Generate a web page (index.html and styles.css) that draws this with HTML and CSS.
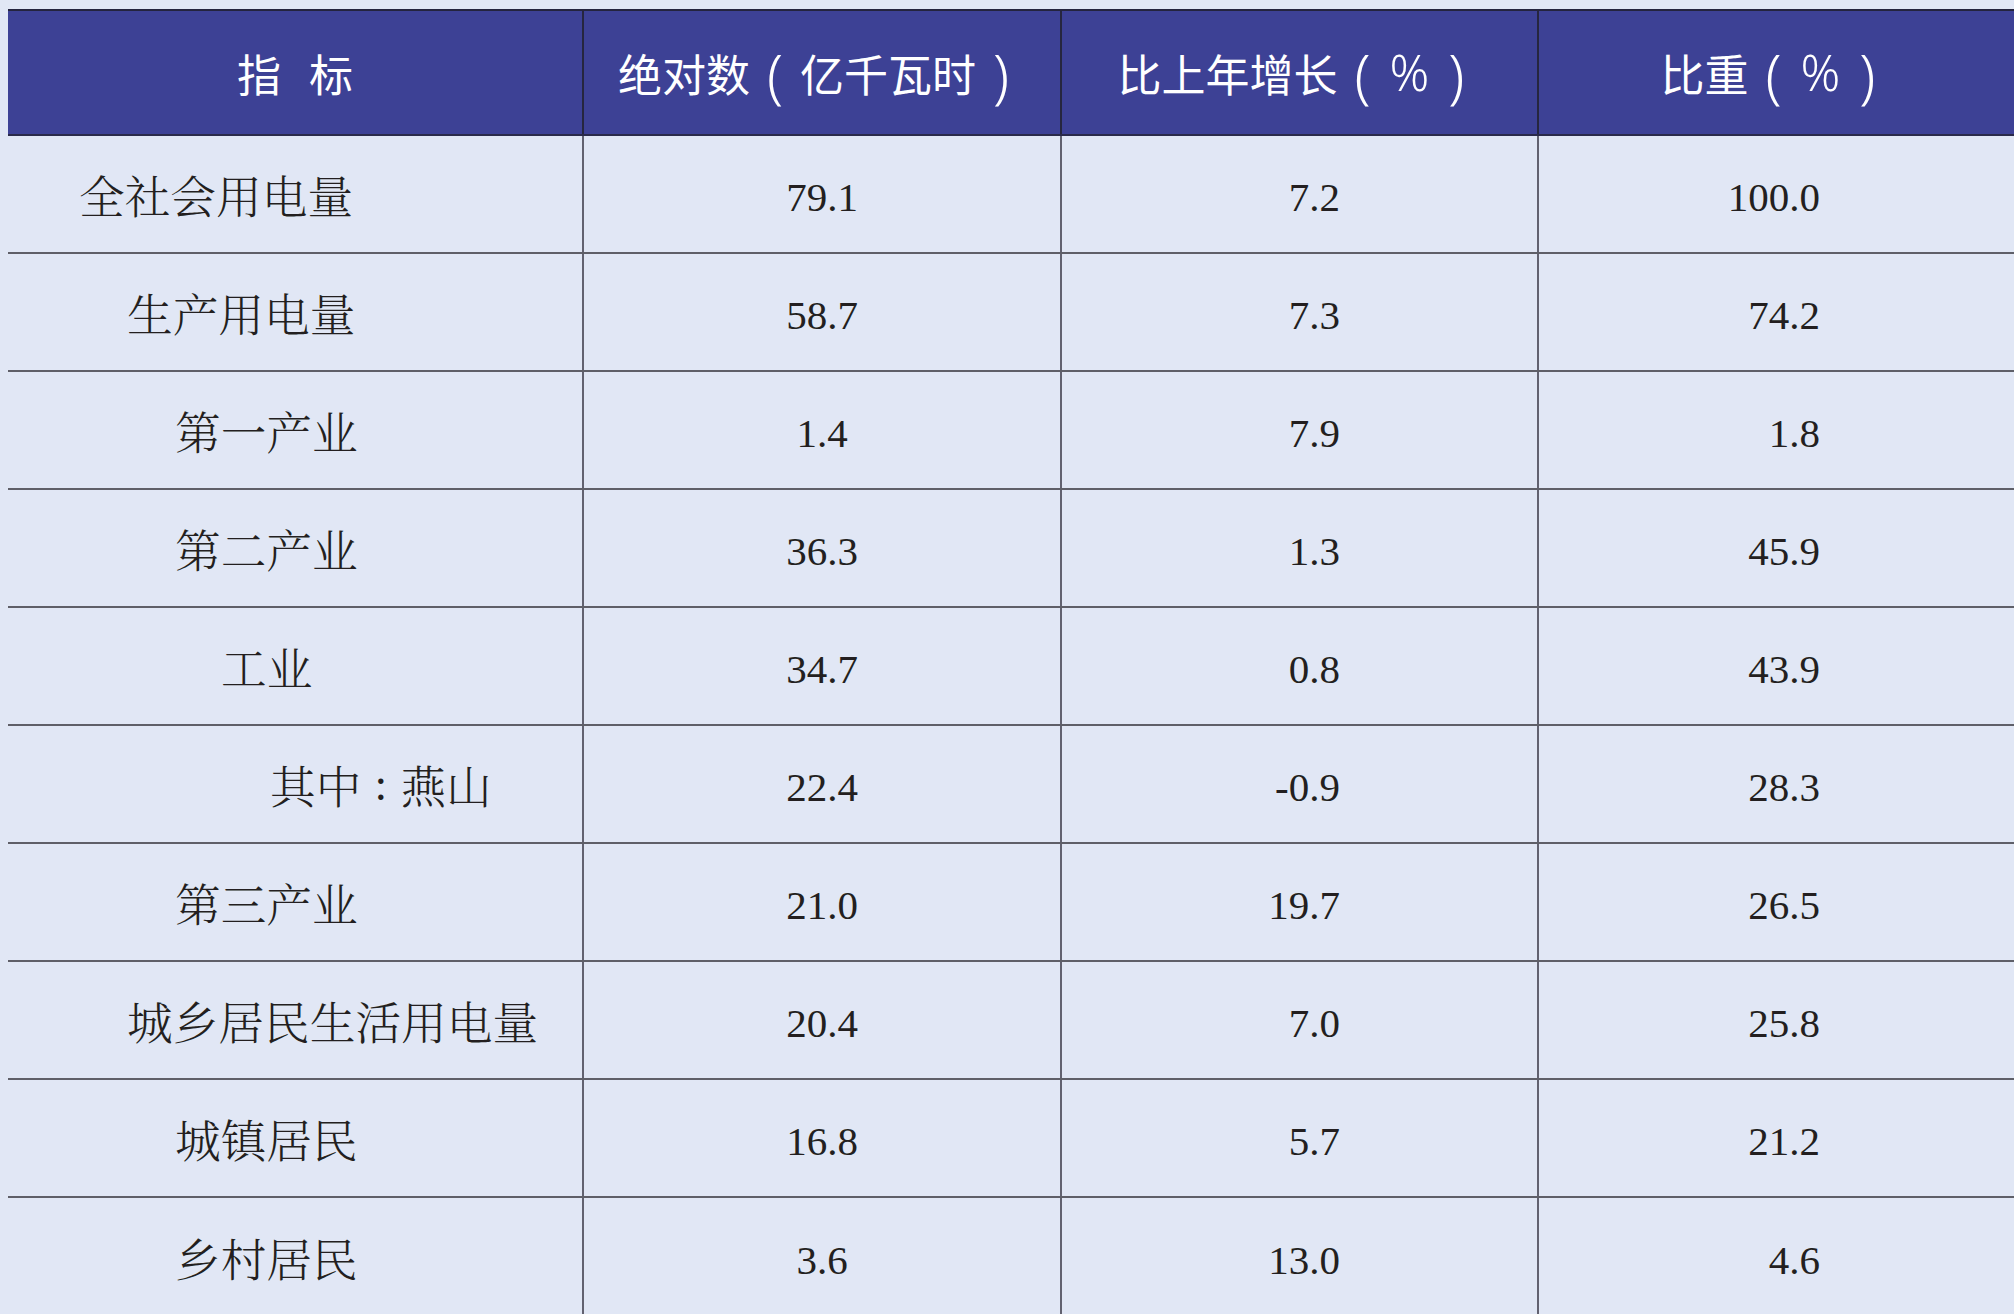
FILE: index.html
```html
<!DOCTYPE html>
<html lang="zh-CN">
<head>
<meta charset="utf-8">
<title>全社会用电量</title>
<link rel="stylesheet" href="styles.css">
</head>
<body>
<div class="table">
  <div class="row head">
    <div class="cell c0">指<span class="gap"></span>标</div>
    <div class="cell c1">绝对数<span class="paren">(</span>亿千瓦时<span class="paren">)</span></div>
    <div class="cell c2">比上年增长<span class="paren">(</span><span class="pct">%</span><span class="paren">)</span></div>
    <div class="cell c3">比重<span class="paren">(</span><span class="pct">%</span><span class="paren">)</span></div>
  </div>
  <div class="row">
    <div class="cell c0 l0">全社会用电量</div>
    <div class="cell c1 num">79.1</div>
    <div class="cell c2 num">7.2</div>
    <div class="cell c3 num">100.0</div>
  </div>
  <div class="row">
    <div class="cell c0 l1">生产用电量</div>
    <div class="cell c1 num">58.7</div>
    <div class="cell c2 num">7.3</div>
    <div class="cell c3 num">74.2</div>
  </div>
  <div class="row">
    <div class="cell c0 l2">第一产业</div>
    <div class="cell c1 num">1.4</div>
    <div class="cell c2 num">7.9</div>
    <div class="cell c3 num">1.8</div>
  </div>
  <div class="row">
    <div class="cell c0 l2">第二产业</div>
    <div class="cell c1 num">36.3</div>
    <div class="cell c2 num">1.3</div>
    <div class="cell c3 num">45.9</div>
  </div>
  <div class="row">
    <div class="cell c0 l3">工业</div>
    <div class="cell c1 num">34.7</div>
    <div class="cell c2 num">0.8</div>
    <div class="cell c3 num">43.9</div>
  </div>
  <div class="row">
    <div class="cell c0 l4">其中<span class="colon">:</span>燕山</div>
    <div class="cell c1 num">22.4</div>
    <div class="cell c2 num">-0.9</div>
    <div class="cell c3 num">28.3</div>
  </div>
  <div class="row">
    <div class="cell c0 l2">第三产业</div>
    <div class="cell c1 num">21.0</div>
    <div class="cell c2 num">19.7</div>
    <div class="cell c3 num">26.5</div>
  </div>
  <div class="row">
    <div class="cell c0 l1">城乡居民生活用电量</div>
    <div class="cell c1 num">20.4</div>
    <div class="cell c2 num">7.0</div>
    <div class="cell c3 num">25.8</div>
  </div>
  <div class="row">
    <div class="cell c0 l2">城镇居民</div>
    <div class="cell c1 num">16.8</div>
    <div class="cell c2 num">5.7</div>
    <div class="cell c3 num">21.2</div>
  </div>
  <div class="row last">
    <div class="cell c0 l2">乡村居民</div>
    <div class="cell c1 num">3.6</div>
    <div class="cell c2 num">13.0</div>
    <div class="cell c3 num">4.6</div>
  </div>
</div>
</body>
</html>
```

FILE: styles.css
```css
html, body {
  margin: 0;
  padding: 0;
  background: #e1e7f5;
  overflow: hidden;
}

body {
  width: 2014px;
  height: 1314px;
  padding: 9px 0 0 8px;
  box-sizing: border-box;
}

.table {
  display: flex;
  flex-direction: column;
  width: 2006px;
}

.row {
  display: grid;
  grid-template-columns: 574px 478px 477px 477px;
  height: 118px;
  box-sizing: border-box;
  border-bottom: 2px solid #5f5f68;
}

.row.last {
  border-bottom: none;
}

.cell {
  display: flex;
  align-items: center;
  box-sizing: border-box;
  height: 100%;
  color: #231f20;
}

.c1, .c2, .c3 {
  border-left: 2px solid #626270;
}

.head {
  height: 127px;
  background: #3d4195;
  border-top: 2px solid #24243e;
  border-bottom: 2px solid #2a2a4a;
}

.head .cell {
  justify-content: center;
  color: #ffffff;
  font-family: "Noto Sans CJK SC", "Noto Sans", sans-serif;
  font-weight: 400;
  font-size: 44px;
  border-left-color: #26263f;
}

.head .c0 {
  border-left: none;
}

.paren {
  display: inline-block;
  width: 50px;
  text-align: center;
  font-family: "Noto Sans", sans-serif;
  font-weight: 300;
  font-size: 58px;
  line-height: 1;
  transform: translateY(2px);
}

.pct {
  font-family: "Noto Sans", sans-serif;
  font-weight: 300;
  font-size: 49px;
  line-height: 1;
  padding: 0 2px;
}

.gap {
  display: inline-block;
  width: 28px;
}

.c0 {
  font-family: "Noto Serif CJK SC", "Noto Sans CJK SC", serif;
  font-weight: 300;
  font-size: 45.7px;
}

.l0 { padding-left: 71px; }
.l1 { padding-left: 119px; }
.l2 { padding-left: 167px; }
.l3 { padding-left: 213px; }
.l4 { padding-left: 262px; }

.colon {
  display: inline-block;
  width: 39px;
  text-align: center;
  font-family: "Liberation Serif", serif;
}

.num {
  font-family: "Liberation Serif", "Times New Roman", serif;
  font-size: 41px;
  padding-top: 6px;
}

.row .c1.num {
  justify-content: center;
}

.row .c2.num {
  justify-content: flex-end;
  padding-right: 197px;
}

.row .c3.num {
  justify-content: flex-end;
  padding-right: 194px;
}
```
